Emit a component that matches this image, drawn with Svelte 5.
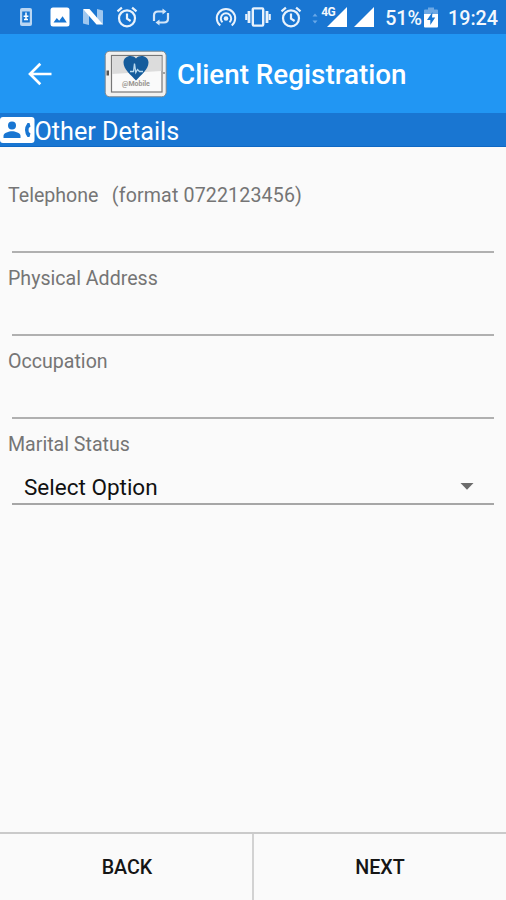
<script>
	let fields = [
		{ id: 'telephone', label: 'Telephone', hint: '(format 0722123456)', value: '' },
		{ id: 'address', label: 'Physical Address', value: '' },
		{ id: 'occupation', label: 'Occupation', value: '' }
	];

	let maritalStatus = 'Select Option';
</script>

{#snippet alarm()}
	<svg width="22" height="22" viewBox="0 0 22 22" fill="none" stroke="#e8f2fc" stroke-width="2.2">
		<circle cx="11" cy="12.3" r="8" />
		<path d="M11 7.5v5.2l3.6 2.3M1.5 5.4l4.4-3.7M20.5 5.4l-4.4-3.7" />
	</svg>
{/snippet}

<div class="screen">
	<div class="status-bar">
		<div class="notifications">
			<svg width="14" height="20" viewBox="0 0 14 20">
				<rect x="1" y="1" width="12" height="18" rx="2" fill="#b9d6f3" />
				<path d="M3.2 4.5h7.6v11H3.2z" fill="#1976d2" />
				<path d="M7 5.5v7M4.6 9.3h4.8M5 12.5h4" stroke="#fff" stroke-width="1.5" />
			</svg>
			<svg width="20" height="20" viewBox="0 0 20 20">
				<rect x="0.5" y="0.5" width="19" height="19" rx="2.5" fill="#fff" />
				<path d="M3.5 15.5l3.3-4.6 2.4 2.8 3.4-4.4 4.2 6.2z" fill="#1976d2" />
			</svg>
			<svg width="22" height="18" viewBox="0 0 22 18">
				<path d="M1 1.5l6 3V17l-6-1.5zM15 1l6 1.5v14l-6-3z" fill="#9fc7ef" />
				<path d="M1 1h6.5L21 16.5h-6.5z" fill="#fff" />
			</svg>
			{@render alarm()}
			<svg width="20" height="20" viewBox="0 0 20 20" fill="none" stroke="#d4e6f8" stroke-width="2.2">
				<path d="M3 14V8.500q0-4 4-4H13M17 6v5.500q0 4-4 4H7" />
				<path d="M11.500 1.500l4 3-4 3zM8.500 12.500l-4 3 4 3z" fill="#d4e6f8" stroke="none" />
			</svg>
		</div>

		<div class="system">
			<svg width="22" height="22" viewBox="0 0 22 22" fill="none" stroke="#e8f2fc" stroke-width="2">
				<path d="M5.300 19.500a9.200 9.200 0 1 1 11.400 0M7.500 16.300a5.200 5.200 0 1 1 7 0" />
				<circle cx="11" cy="12.500" r="2.300" fill="#e8f2fc" stroke="none" />
			</svg>
			<svg class="vibrate" width="28" height="20" viewBox="0 0 28 20" fill="none" stroke="#e8f2fc">
				<rect x="8.800" y="1.400" width="10.400" height="17.200" rx="1" stroke-width="2.400" />
				<path d="M5 4v12M23 4v12" stroke-width="2.800" />
				<path d="M2.300 7v6M25.700 7v6" stroke-width="2.200" />
			</svg>
			{@render alarm()}
			<svg class="traffic" width="6" height="12" viewBox="0 0 6 12" fill="#69a8e8">
				<path d="M0.500 4.500L3 1.500l2.500 3zM0.500 8.500L3 11.500l2.500-3z" />
			</svg>
			<div class="signal">
				<span class="network">4G</span>
				<svg width="20" height="20" viewBox="0 0 20 20"><path d="M0 20L20 0v20z" fill="#fff" /></svg>
			</div>
			<svg width="20" height="20" viewBox="0 0 20 20"><path d="M0 20L20 0v20z" fill="#fff" /></svg>
			<span class="percent">51%</span>
			<svg width="14" height="21" viewBox="0 0 14 21">
				<path d="M4 0.500h6v2h3q1 0 1 1V8H0V3.500q0-1 1-1h3z" fill="#6da8e4" />
				<path d="M0 7h14v12.500q0 1-1 1H1q-1 0-1-1z" fill="#fff" />
				<path d="M8.500 5L3 13h3.300v5L11.200 10.500H8z" fill="#1976d2" />
			</svg>
			<span class="time">19:24</span>
		</div>
	</div>

	<header class="app-bar">
		<button class="up" aria-label="Navigate up">
			<svg width="24" height="24" viewBox="0 0 24 24" fill="none" stroke="#fff" stroke-width="2.700">
				<path d="M23.500 12H3M12.300 1.700L2 12l10.300 10.300" />
			</svg>
		</button>
		<svg class="logo" width="64" height="48" viewBox="0 0 64 48">
			<rect x="1.200" y="1.200" width="61" height="45.600" rx="4.500" fill="#f2f1ef" stroke="#7b8790" stroke-width="1" />
			<rect x="7.500" y="5.500" width="50.500" height="36.500" fill="#fafafa" stroke="#777" stroke-width="1.200" />
			<path d="M8.100 6.100h49.300v15L8.100 24z" fill="#dcdcdc" />
			<path d="M2.500 20.500H5v5H2.500z" fill="#555" />
			<circle cx="60" cy="23" r="1" fill="#888" />
			<path d="M32 30.500C27 25 19.500 19.500 19.500 12.500 19.500 6 28 4 32 8.500c4-4.500 12.500-2.500 12.500 4C44.500 19.500 37 25 32 30.500z" fill="#155c9c" />
			<path d="M26 21.500h3.500l1-8 1.300 9 1.700-3 2 2H39" fill="none" stroke="#b9d9ee" stroke-width="1.300" />
			<text x="32" y="36" text-anchor="middle" class="logo-text">@Mobile</text>
		</svg>
		<h1>Client Registration</h1>
	</header>

	<div class="section">
		<svg width="35" height="26" viewBox="0 0 35 26">
			<rect width="34.500" height="26" rx="3" fill="#fff" />
			<g fill="#1976d2">
				<circle cx="12" cy="8.500" r="4" />
				<path d="M3.500 21v-2.200c0-3 5.600-4.600 8.500-4.600s8.500 1.600 8.500 4.600V21z" />
				<path d="M27.500 6h2l1 3.400-1.700 1.500q-.500 2.100 0 4.200l1.700 1.500-1 3.400h-2q-5-7 0-14z" />
			</g>
		</svg>
		<h2>Other Details</h2>
	</div>

	<main>
		{#each fields as field}
			<div class="field">
				<label for={field.id}>
					{field.label}
					{#if field.hint}<span class="hint">{field.hint}</span>{/if}
				</label>
				<input id={field.id} type="text" bind:value={field.value} />
			</div>
		{/each}
		<div class="field">
			<span class="label">Marital Status</span>
			<button class="spinner">
				<span>{maritalStatus}</span>
				<svg width="14" height="7" viewBox="0 0 14 7"><path d="M0.500 0h13L7 6.700z" fill="#6b6b6b" /></svg>
			</button>
		</div>
	</main>

	<footer>
		<button>BACK</button>
		<button>NEXT</button>
	</footer>
</div>

<style>
	:global(body) {
		margin: 0;
		background: #fafafa;
	}

	.screen {
		display: flex;
		flex-direction: column;
		width: 506px;
		height: 900px;
		overflow: hidden;
		background: #fafafa;
		font-family: Roboto, sans-serif;
	}

	svg {
		display: block;
		flex-shrink: 0;
	}

	button {
		padding: 0;
		border: none;
		background: none;
		font-family: inherit;
		cursor: pointer;
	}

	h1,
	h2 {
		margin: 0;
	}

	.status-bar {
		display: flex;
		justify-content: space-between;
		height: 34px;
		flex-shrink: 0;
		box-sizing: border-box;
		padding: 0 8px 0 9px;
		background: #1976d2;
		color: #f3f8fd;
	}

	.notifications {
		display: grid;
		grid-template-columns: repeat(5, 33.8px);
		align-items: center;
		justify-items: center;
	}

	.system {
		display: flex;
		align-items: center;
	}

	.vibrate {
		margin: 0 8px 0 7px;
	}

	.traffic {
		margin: 2px 9px 0 10px;
	}

	.signal {
		position: relative;
		margin-right: 7px;
	}

	.network {
		position: absolute;
		top: -1px;
		left: -6px;
		font-size: 12px;
		line-height: 12px;
		font-weight: 700;
		letter-spacing: -0.5px;
	}

	.percent,
	.time {
		font-size: 19.7px;
		font-weight: 500;
		line-height: 34px;
		padding-top: 3px;
	}

	.percent {
		margin: 0 2px 0 11px;
	}

	.time {
		margin-left: 10px;
	}

	.app-bar {
		display: flex;
		align-items: center;
		height: 79px;
		flex-shrink: 0;
		background: #2196f3;
		color: #fff;
	}

	.up {
		margin: 0 0 0 28px;
	}

	.logo {
		margin: 0 9px 0 52px;
	}

	.logo-text {
		font-size: 7px;
		font-weight: 700;
		fill: #99958f;
	}

	h1 {
		font-size: 27.8px;
		font-weight: 500;
		line-height: 32px;
		padding-top: 3px;
		white-space: nowrap;
	}

	.section {
		display: flex;
		align-items: center;
		height: 34px;
		flex-shrink: 0;
		box-sizing: border-box;
		border-bottom: 1px solid #0f68c4;
		background: #1976d2;
		color: #fff;
	}

	h2 {
		font-size: 25.2px;
		font-weight: 400;
		line-height: 30px;
		padding-top: 4px;
		margin-left: -0.5px;
	}

	main {
		flex: 1;
		padding: 37px 12px 0 8px;
	}

	.field {
		height: 83px;
	}

	label,
	.label {
		display: block;
		height: 24px;
		color: #757575;
		font-size: 19.6px;
		line-height: 24px;
	}

	.hint {
		margin-left: 4.5px;
		padding-left: 4px;
		letter-spacing: 0.15px;
	}

	input {
		display: block;
		box-sizing: border-box;
		width: 482px;
		height: 45px;
		margin-left: 4px;
		padding: 0 4px;
		border: none;
		border-bottom: 2px solid #b0b0b0;
		outline: none;
		background: none;
		font-family: inherit;
		font-size: 22px;
	}

	.spinner {
		display: flex;
		align-items: center;
		justify-content: space-between;
		box-sizing: border-box;
		width: 482px;
		height: 48px;
		margin-left: 4px;
		padding: 13px 20px 0 12px;
		border-bottom: 2px solid #a6a6a6;
		color: #111;
		font-size: 22.5px;
	}

	footer {
		display: grid;
		grid-template-columns: 254px 252px;
		height: 68px;
		box-sizing: border-box;
		border-top: 2px solid #cacaca;
	}

	footer button {
		color: #151515;
		font-size: 19.7px;
		font-weight: 500;
	}

	footer button:first-child {
		padding-left: 2px;
		border-right: 2px solid #d2d2d2;
	}
</style>
